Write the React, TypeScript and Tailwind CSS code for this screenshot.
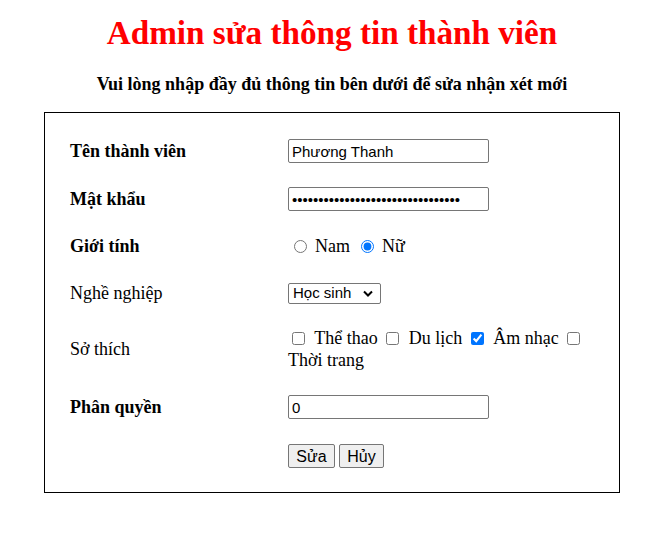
import type { ReactNode } from "react";

const serif = "font-['Liberation_Serif','Times_New_Roman',serif]";
const sans = "font-['Liberation_Sans',Arial,sans-serif]";

function Row({ label, bold = false, height, children }: { label: string; bold?: boolean; height: string; children: ReactNode }) {
  return (
    <div className={`flex items-center text-[18px] ${height}`}>
      <div className={`w-[218px] shrink-0 ${bold ? "font-bold" : ""}`}>{label}</div>
      <div className="flex-1">{children}</div>
    </div>
  );
}

const field = `h-[24px] w-[201px] rounded-[2px] border border-[#767676] bg-white px-[3px] text-[15px] leading-[20px] text-black outline-none ${sans}`;
const box = "ml-[4px] mr-[5px] h-[13px] w-[13px] align-[-1px] accent-[#0075ff]";

export default function App() {
  return (
    <div className={`min-h-[533px] w-[657px] bg-white pl-[7px] text-black ${serif}`}>
      <h1 className="pt-[14px] text-center text-[33.2px] font-bold leading-[38px] text-[#ff0000]">Admin sửa thông tin thành viên</h1>
      <h4 className="mt-[22px] text-center text-[18px] font-bold leading-[20px]">Vui lòng nhập đầy đủ thông tin bên dưới để sửa nhận xét mới</h4>

      <div className="ml-[37px] mt-[18px] w-[576px] border border-black pb-[12px] pl-[25px] pt-[14px]">
        <Row label="Tên thành viên" bold height="h-[48px]">
          <input className={field} defaultValue="Phương Thanh" />
        </Row>
        <Row label="Mật khẩu" bold height="h-[48px]">
          <input type="password" className={field} defaultValue="phuongthanh2002matkhaubaomat1234" />
        </Row>
        <Row label="Giới tính" bold height="h-[47px]">
          <label className="inline-flex items-center">
            <input type="radio" name="gt" className="ml-[6px] mr-[3px] h-[13px] w-[13px] accent-[#0075ff]" />
            <span className="ml-[5px]">Nam</span>
          </label>
          <label className="ml-[6px] inline-flex items-center">
            <input type="radio" name="gt" defaultChecked className="ml-[5px] mr-[3px] h-[13px] w-[13px] accent-[#0075ff]" />
            <span className="ml-[5px]">Nữ</span>
          </label>
        </Row>
        <Row label="Nghề nghiệp" height="h-[46px]">
          <div className={`flex h-[21px] w-[93px] items-center justify-between rounded-[2px] border border-[#767676] bg-white pl-[4px] pr-[7px] text-[15px] ${sans}`}>
            <span>Học sinh</span>
            <svg width="10" height="7" viewBox="0 0 10 7" fill="none">
              <path d="M1 1.5 L5 5.5 L9 1.5" stroke="black" strokeWidth="2" />
            </svg>
          </div>
        </Row>
        <Row label="Sở thích" height="h-[66px]">
          <div className="w-[310px] leading-[22px]">
            <input type="checkbox" className={box} /> Thể thao{" "}
            <input type="checkbox" className={box} /> Du lịch{" "}
            <input type="checkbox" defaultChecked className={box} /> Âm nhạc{" "}
            <input type="checkbox" className={box} /> Thời trang
          </div>
        </Row>
        <Row label="Phân quyền" bold height="h-[50px]">
          <input className={field} defaultValue="0" />
        </Row>
        <Row label="" height="h-[48px]">
          <div className={`flex gap-[4px] text-[16px] ${sans}`}>
            <button className="h-[24px] w-[47px] rounded-[2px] border border-[#767676] bg-[#efefef]">Sửa</button>
            <button className="h-[24px] w-[45px] rounded-[2px] border border-[#767676] bg-[#efefef]">Hủy</button>
          </div>
        </Row>
      </div>
    </div>
  );
}
